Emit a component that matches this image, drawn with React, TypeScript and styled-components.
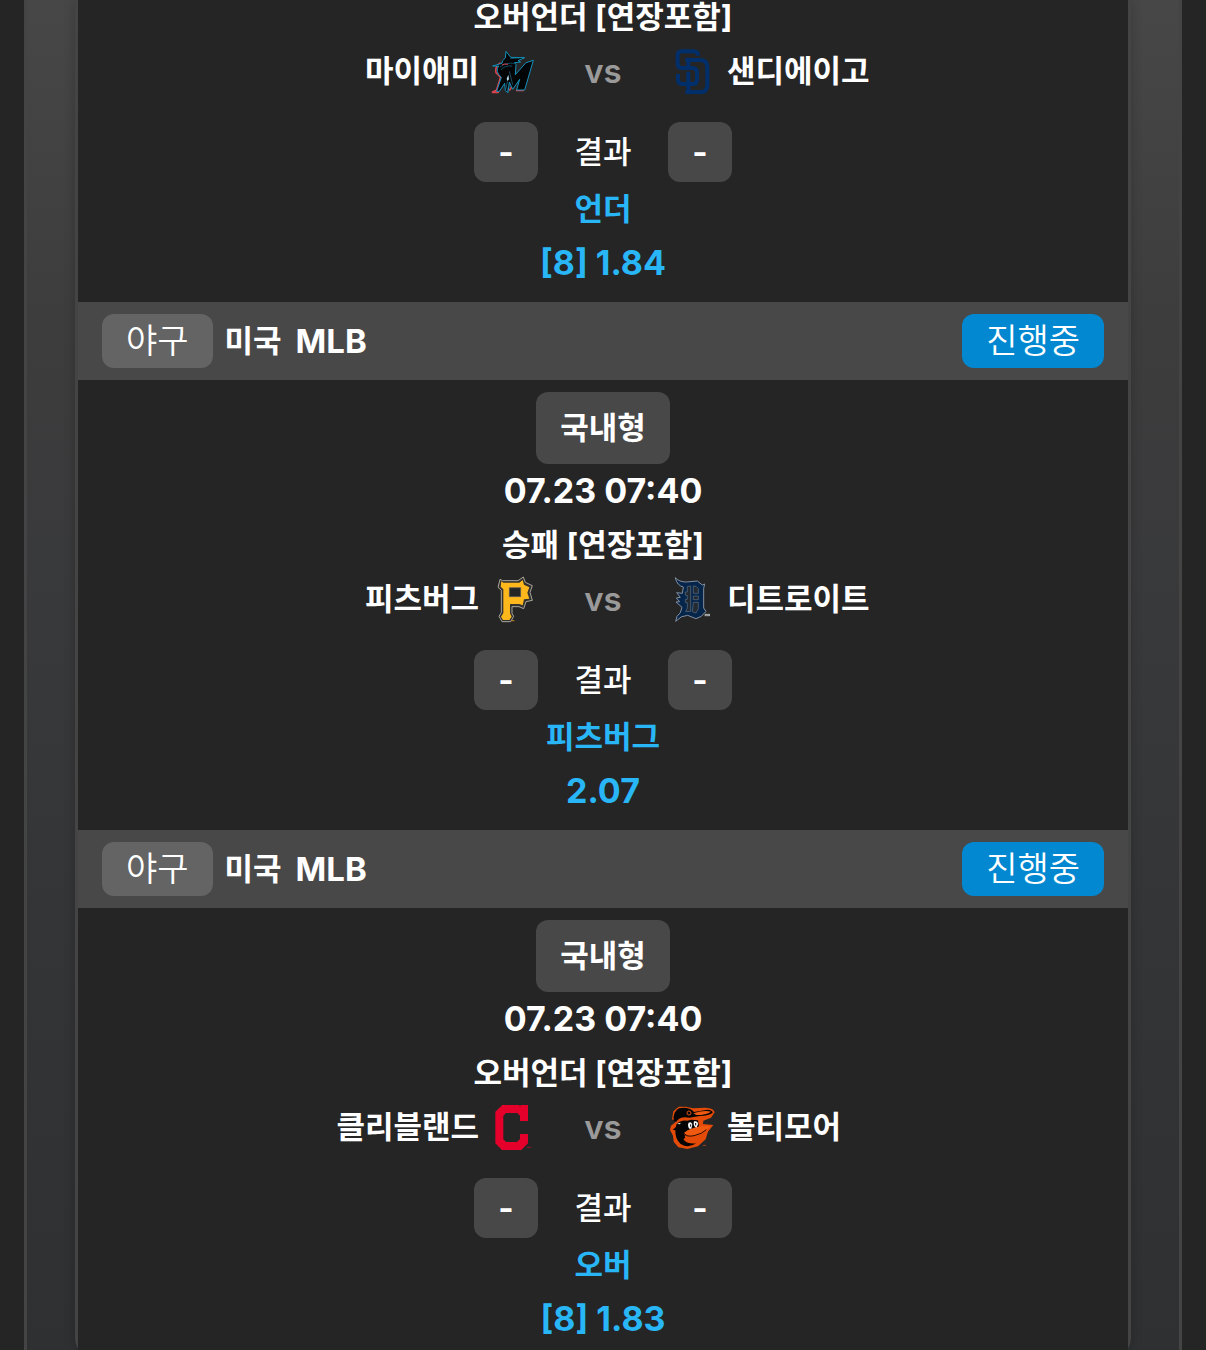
import React from "react";
import styled, { createGlobalStyle } from "styled-components";

const GlobalStyle = createGlobalStyle`
  * { box-sizing: border-box; }
  body {
    margin: 0;
    background: #252525;
    color: #fff;
    font-family: Inter, "Noto Sans CJK KR", sans-serif;
  }
`;

const Page = styled.main`
  padding: 0 24px;
  height: 100vh;
  overflow: hidden;
`;

const Panel = styled.section`
  min-height: 100vh;
  padding: 0 48px;
  border: solid #444;
  border-width: 0 3px;
  background: linear-gradient(#474747, #3d3d3e 23%, #323335 78%, #2f3032);
`;

const List = styled.div`
  display: flow-root;
  border: solid #444;
  border-width: 0 3px;
  border-radius: 0 0 20px 20px;
  background: #252525;
  box-shadow: 0 0 12px rgba(0, 0, 0, 0.2);
`;

const Card = styled.article<{ $continued?: boolean }>`
  margin-top: ${(p) => (p.$continued ? "-10px" : "0")};
`;

const CardHeader = styled.header`
  display: flex;
  align-items: center;
  gap: 12px;
  height: 78px;
  padding: 0 24px;
  background: #484848;
`;

const Tag = styled.span<{ $live?: boolean }>`
  height: 54px;
  padding: 0 24px;
  border-radius: 12px;
  background: ${(p) => (p.$live ? "#0288d1" : "#646464")};
  font-size: 34px;
  font-weight: 350;
  line-height: 54px;
  white-space: nowrap;
  margin-left: ${(p) => (p.$live ? "auto" : "0")};
`;

const League = styled.h2`
  display: flex;
  gap: 14px;
  margin: 0;
  font-size: 31px;
  font-weight: 600;
  line-height: 54px;
  white-space: nowrap;
`;

const LeagueCode = styled.span`
  font-size: 33px;
  font-weight: 700;
`;

const CardBody = styled.div<{ $continued?: boolean }>`
  display: flex;
  flex-direction: column;
  align-items: center;
  padding: ${(p) => (p.$continued ? "0" : "12px")} 0 12px;
  background: #252525;
`;

const TypeButton = styled.button`
  height: 72px;
  padding: 0 24px;
  border: 0;
  border-radius: 12px;
  background: #484848;
  color: inherit;
  font: 600 31px/72px Inter, "Noto Sans CJK KR", sans-serif;
`;

const Line = styled.div<{ $pick?: boolean; $numeric?: boolean }>`
  color: ${(p) => (p.$pick ? "#29b6f6" : "inherit")};
  font-size: ${(p) => (p.$numeric ? "34px" : "31px")};
  font-weight: 700;
  line-height: 54px;
  text-align: center;
`;

const Teams = styled.div`
  display: grid;
  grid-template-columns: 1fr 132px 1fr;
  align-items: center;
  width: 100%;
  height: 54px;
  margin-bottom: 24px;
`;

const Team = styled.div<{ $away?: boolean }>`
  display: flex;
  align-items: center;
  justify-content: ${(p) => (p.$away ? "flex-start" : "flex-end")};
  gap: 10px;
  font-size: 31px;
  font-weight: 600;
  line-height: 54px;
`;

const Versus = styled.span`
  color: #9a9a9a;
  font-size: 33px;
  font-weight: 600;
  line-height: 54px;
  text-align: center;
`;

const Logo = styled.svg`
  display: block;
  flex: none;
  width: 48px;
  height: 48px;
`;

const Result = styled.div`
  display: grid;
  grid-template-columns: 64px 130px 64px;
  height: 60px;
  font-size: 31px;
  font-weight: 500;
  line-height: 60px;
  text-align: center;
`;

const Score = styled.span`
  border-radius: 12px;
  background: #484848;
  font-size: 33px;
  font-weight: 700;
`;

type LogoName = "marlins" | "padres" | "pirates" | "tigers" | "cleveland" | "orioles";

const logos: Record<LogoName, React.ReactNode> = {
  marlins: (
    <Logo viewBox="27 51 144 144" role="img" aria-label="마이애미">
      <path d="M62 98Q44 108 48 128L60 140M62 140 50 180 36 187H54L60 176M104 156 88 182M108 181H132" fill="none" stroke="#d9434d" strokeWidth="5" />
      <path d="M78 64 92 82 134 83 114 92 122 96 104 98 108 104 106 134 138 98 160 91 134 180H110L119 148 98 178 88 156 84 188 76 182 74 160 58 184H50L64 142Q44 124 56 108L38 108 66 100 68 92 76 84Z" fill="#020405" stroke="#1391bb" strokeWidth="3" strokeLinejoin="round" />
      <path d="M60 111Q76 97 104 100M90 86 120 84M62 120Q74 106 96 108" fill="none" stroke="#126d8c" strokeWidth="2" />
      <path d="M66 105Q72 100 84 103" fill="none" stroke="#d9434d" strokeWidth="3" />
      <path d="M80 146 85 134 87 148 82 153Z" fill="#b7dceb" />
      <path d="M88 124 98 164M82 154Q76 170 84 186" fill="none" stroke="#2f7590" strokeWidth="2" />
    </Logo>
  ),
  padres: (
    <Logo viewBox="27 51 144 144" role="img" aria-label="샌디에이고">
      <g fill="none" stroke="#002f6c" strokeWidth="12">
        <path d="M113 77V70Q108 64 102 64H65Q53 65 53 76V102Q54 114 67 114H99Q111 116 111 127V150Q110 162 98 162H68Q54 161 54 149V132" />
        <path d="M79 90H122Q141 92 142 110V167Q140 185 124 186H80M85 90V112M85 125V186" />
      </g>
      <path d="M76 83H89V96H76ZM76 179H94V192H76Z" fill="#002f6c" />
    </Logo>
  ),
  pirates: (
    <Logo viewBox="27 45 144 144" role="img" aria-label="피츠버그">
      <path d="M60 58 68 62H114L130 51 136 67 157 77 150 97 157 121 138 125 131 146 117 140H96V160L101 169 92 185H66L57 169 64 157V91L54 82Z" fill="#33312e" stroke="#aaa69d" strokeWidth="3" strokeLinejoin="round" />
      <path fillRule="evenodd" d="M64 64 70 68H118L128 60 132 74 148 82 142 98 148 116 132 118 128 136 118 132H90V160L95 170 88 180H69L63 170 70 159V88L62 80ZM88 83V110H122V83Z" fill="#ffb81c" />
      <path d="M88 83H122V110H88Z" fill="#252525" stroke="#77715f" strokeWidth="2" />
      <path d="M94 182H103" stroke="#c58b18" strokeWidth="3" />
    </Logo>
  ),
  tigers: (
    <Logo viewBox="27 45 144 144" role="img" aria-label="디트로이트">
      <path d="M46 53Q57 66 79 66L112 63 127 75 134 72 131 85V144L138 154 124 169 108 176 83 166Q63 166 47 184Q48 167 61 158L66 142 48 126 59 125 49 114 61 112 50 98 67 100 70 81Q51 77 46 53Z" fill="#06254b" stroke="#8390a0" strokeWidth="3" strokeLinejoin="round" />
      <path d="M82 80V96H76V106H82V118H76V128H82V144L77 155 92 154V78ZM100 78V100H115V86L108 79ZM100 108H115V119H100ZM100 127H115V146L108 159 97 155Z" fill="#232a32" stroke="#5e7185" strokeWidth="2" />
      <path d="M134 165H150" fill="none" stroke="#a9acae" strokeWidth="7" />
      <path d="M139 164V169M144 163V169" stroke="#555" strokeWidth="1" />
    </Logo>
  ),
  cleveland: (
    <Logo viewBox="27 39 144 144" role="img" aria-label="클리블랜드">
      <path d="M67 45H117L120 48 123 45H144V93H120V77L112 69H78L70 77V148L78 156H111L120 147V132H144V160L124 180H66L46 160V65Z" fill="#e4002b" />
      <path d="M141 172H154" stroke="#96122e" strokeWidth="3" />
    </Logo>
  ),
  orioles: (
    <Logo viewBox="27 39 144 144" role="img" aria-label="볼티모어">
      <path d="M48 95 36 88 40 64 56 50 77 50 99 55 137 53Q161 54 164 67L153 83 130 92 129 102 160 105 144 125 137 148 114 169 82 177 55 172 41 155 39 137 30 120 33 107Z" fill="#e44b08" />
      <path d="M41 93Q38 65 57 55 86 49 102 66L142 59Q158 60 158 68 149 76 119 78L88 83Q60 78 49 95Z" fill="#050505" />
      <path d="M100 70Q133 59 153 65 139 75 109 75Z" fill="#f05a10" />
      <path d="M50 102Q62 89 82 92L93 89 114 91 117 109 96 120Q82 121 72 128 73 139 89 141 69 144 71 149 83 163 109 160 85 176 62 162 45 148 46 121L38 119 47 112Z" fill="#050505" />
      <path d="M90 118Q123 105 151 109L133 125Q112 140 78 136 67 127 90 118Z" fill="#f05a10" />
      <path d="M74 137Q110 145 138 119 130 142 112 157 93 162 77 151Z" fill="#e44b08" />
      <path d="M73 130Q80 142 102 137 126 132 139 119" fill="none" stroke="#2a0d02" strokeWidth="3" />
      <path d="M86 98Q94 94 97 104L94 116Q85 119 84 104ZM102 94Q114 92 114 103L109 113Q101 110 101 99Z" fill="#fff" />
      <path d="M92 103V110M107 99V106" stroke="#050505" strokeWidth="3" />
      <path d="M51 101 63 98 59 103Z" fill="#fff" />
      <circle cx="87" cy="69" r="6" fill="none" stroke="#df510e" strokeWidth="3" />
      <path d="M129 166H138" stroke="#a54017" strokeWidth="3" />
    </Logo>
  ),
};

interface Match {
  continued?: boolean;
  rule: string;
  home: string;
  homeLogo: LogoName;
  away: string;
  awayLogo: LogoName;
  pick: string;
  odds: string;
}

const matches: Match[] = [
  { continued: true, rule: "오버언더 [연장포함]", home: "마이애미", homeLogo: "marlins", away: "샌디에이고", awayLogo: "padres", pick: "언더", odds: "[8] 1.84" },
  { rule: "승패 [연장포함]", home: "피츠버그", homeLogo: "pirates", away: "디트로이트", awayLogo: "tigers", pick: "피츠버그", odds: "2.07" },
  { rule: "오버언더 [연장포함]", home: "클리블랜드", homeLogo: "cleveland", away: "볼티모어", awayLogo: "orioles", pick: "오버", odds: "[8] 1.83" },
];

function MatchCard({ match }: { match: Match }) {
  return (
    <Card $continued={match.continued}>
      {!match.continued && (
        <CardHeader>
          <Tag>야구</Tag>
          <League>
            <span>미국</span> <LeagueCode>MLB</LeagueCode>
          </League>
          <Tag $live>진행중</Tag>
        </CardHeader>
      )}
      <CardBody $continued={match.continued}>
        {!match.continued && (
          <>
            <TypeButton type="button">국내형</TypeButton>
            <Line $numeric>07.23 07:40</Line>
          </>
        )}
        <Line>{match.rule}</Line>
        <Teams>
          <Team>
            {match.home}
            {logos[match.homeLogo]}
          </Team>
          <Versus>vs</Versus>
          <Team $away>
            {logos[match.awayLogo]}
            {match.away}
          </Team>
        </Teams>
        <Result>
          <Score>-</Score>
          <span>결과</span>
          <Score>-</Score>
        </Result>
        <Line $pick>{match.pick}</Line>
        <Line $pick $numeric>{match.odds}</Line>
      </CardBody>
    </Card>
  );
}

export default function App() {
  return (
    <>
      <GlobalStyle />
      <Page>
        <Panel>
          <List>
            {matches.map((match) => (
              <MatchCard key={match.home} match={match} />
            ))}
          </List>
        </Panel>
      </Page>
    </>
  );
}
